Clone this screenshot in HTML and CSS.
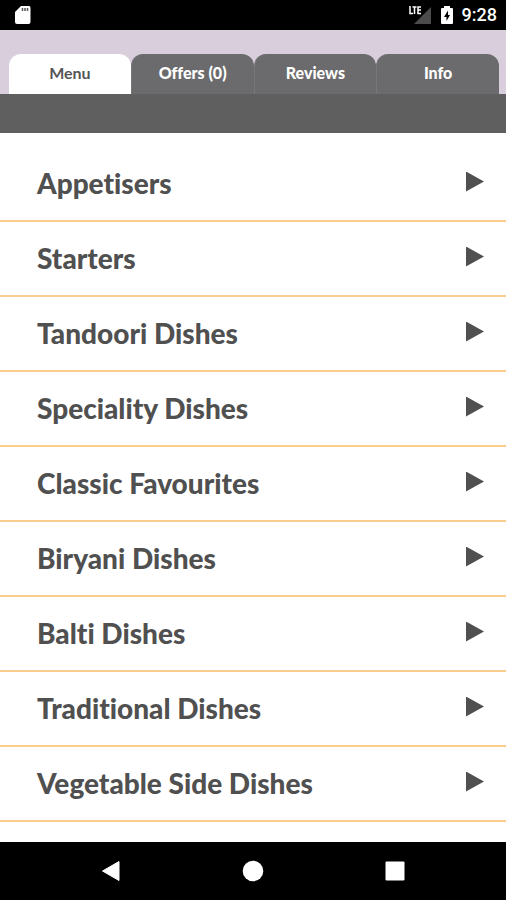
FILE: index.html
```html
<!DOCTYPE html>
<html lang="en">
<head>
<meta charset="utf-8">
<meta name="viewport" content="width=device-width, initial-scale=1">
<title>Menu</title>
<link rel="stylesheet" href="styles.css">
</head>
<body>
<div class="status">
  <svg class="sd" viewBox="0 0 16 20" width="16" height="20" aria-hidden="true"><path fill="#fff" d="M6 1h8q1.500 0 1.500 2v14q0 2-2 2H2q-2 0-2-2V7z"/><path stroke="#555" stroke-width="1.500" d="M7.500 3v3M10 3v3M12.500 3v3"/></svg>
  <div class="indicators">
    <svg viewBox="0 0 24 20" width="24" height="20" aria-hidden="true"><path fill="#4b4b4b" d="M23 2v17H6z"/><path fill="none" stroke="#fff" stroke-width="1.500" d="M2 1v7.500h3M4.500 2h4M6.500 2v7M13 2h-3v6.500h3M10 5h3"/></svg>
    <svg viewBox="0 0 12 20" width="12" height="20" aria-hidden="true"><path fill="#fff" d="M3 1h6v2h2q1 0 1 1v14q0 1-1 1H1q-1 0-1-1V4q0-1 1-1h2z"/><path d="M7 5.500 3 12H5.500V16L9 10H7z"/></svg>
    <span class="clock">9:28</span>
  </div>
</div>
<header class="tabs">
  <button class="tab active" type="button">Menu</button>
  <button class="tab" type="button">Offers (0)</button>
  <button class="tab" type="button">Reviews</button>
  <button class="tab" type="button">Info</button>
</header>
<div class="bar"></div>
<main class="list">
  <a class="row" href="#">Appetisers<span class="arrow"></span></a>
  <a class="row" href="#">Starters<span class="arrow"></span></a>
  <a class="row" href="#">Tandoori Dishes<span class="arrow"></span></a>
  <a class="row" href="#">Speciality Dishes<span class="arrow"></span></a>
  <a class="row" href="#">Classic Favourites<span class="arrow"></span></a>
  <a class="row" href="#">Biryani Dishes<span class="arrow"></span></a>
  <a class="row" href="#">Balti Dishes<span class="arrow"></span></a>
  <a class="row" href="#">Traditional Dishes<span class="arrow"></span></a>
  <a class="row" href="#">Vegetable Side Dishes<span class="arrow"></span></a>
</main>
<nav class="system">
  <button type="button" aria-label="Back"><svg viewBox="0 0 22 22" width="22" height="22"><path fill="#fff" stroke="#fff" stroke-linejoin="round" d="M19 1.500v19L2.500 11z"/></svg></button>
  <button type="button" aria-label="Home"><svg viewBox="0 0 22 22" width="22" height="22"><circle cx="11" cy="11" r="10.300" fill="#fff"/></svg></button>
  <button type="button" aria-label="Recent apps"><svg viewBox="0 0 22 22" width="22" height="22"><rect x="1.500" y="1.500" width="19" height="19" rx="1" fill="#fff"/></svg></button>
</nav>
</body>
</html>
```

FILE: styles.css
```css
* { box-sizing: border-box; }

body {
  margin: 0;
  min-height: 100vh;
  display: flex;
  flex-direction: column;
  background: #fff;
  color: #505050;
  font-family: Lato, sans-serif;
  font-variant-ligatures: none;
}

button {
  margin: 0;
  padding: 0;
  border: 0;
  background: none;
  font: inherit;
  font-variant-ligatures: none;
  color: inherit;
}

svg { display: block; }

.status {
  height: 30px;
  padding: 0 9px 0 15px;
  display: flex;
  align-items: center;
  justify-content: space-between;
  background: #000;
  color: #fff;
}

.indicators {
  display: flex;
  align-items: center;
  gap: 9px;
}

.clock {
  font: 500 18px/20px Roboto, sans-serif;
}

.tabs {
  display: flex;
  padding: 24px 7px 0 9px;
  background: #d9cedb;
}

.tab {
  flex: 1;
  height: 40px;
  padding-bottom: 2px;
  border-radius: 12px 12px 0 0;
  background: #6b6b6d;
  color: #fff;
  font-size: 16px;
  font-weight: 900;
  line-height: 20px;
}

.tab + .tab {
  border-left: 1px solid #77777a;
}

.tab.active {
  background: #fff;
  color: #555;
  font-weight: 700;
}

.bar {
  height: 39px;
  background: #5f5f5f;
}

.list {
  flex: 1;
  padding-top: 14px;
}

.row {
  height: 75px;
  padding: 0 22px 2px 37px;
  display: flex;
  align-items: center;
  justify-content: space-between;
  border-bottom: 2px solid #fccb8e;
  color: inherit;
  font-size: 28px;
  font-weight: 900;
  line-height: 32px;
  text-decoration: none;
}

.arrow {
  width: 18px;
  height: 20px;
  margin-bottom: 2px;
  background: #505050;
  clip-path: polygon(0 0, 100% 50%, 0 100%);
}

.system {
  height: 58px;
  padding: 0 8%;
  display: grid;
  grid-template-columns: repeat(3, 1fr);
  background: #000;
}

.system button {
  display: grid;
  place-items: center;
}
```
